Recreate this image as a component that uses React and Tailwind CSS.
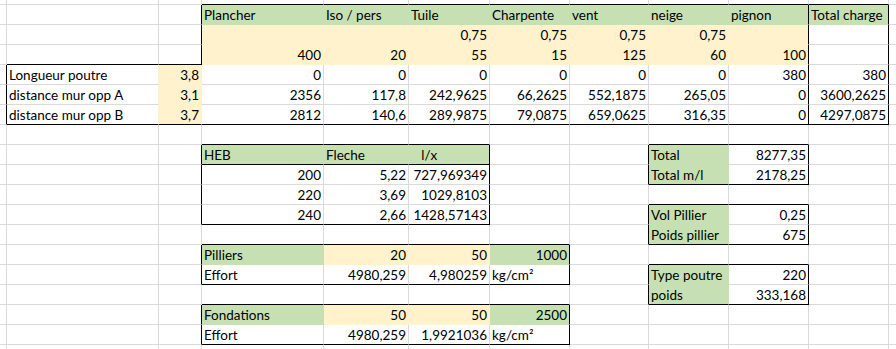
import React from "react";

const NCOLS = 12;
const NROWS = 19;

const fillBg = { g: "bg-[#c6e0b4]", o: "bg-[#fff2cc]" };
const rightColor = {
    k: "border-r-black",
    n: "border-r-[#dadada]",
    g: "border-r-[#c6e0b4]",
    o: "border-r-[#fff2cc]",
};
const bottomColor = {
    k: "border-b-black",
    n: "border-b-[#dadada]",
    g: "border-b-[#c6e0b4]",
    o: "border-b-[#fff2cc]",
};

// [row, col, text, fill]
const cellList = [
    // charges
    [1, 3, "Plancher", "g"], [1, 4, "Iso / pers", "g"], [1, 5, "Tuile", "g"], [1, 6, "Charpente", "g"],
    [1, 7, "vent", "g"], [1, 8, "neige", "g"], [1, 9, "pignon", "g"], [1, 10, "Total charge", "g"],
    [2, 3, "", "o"], [2, 4, "", "o"], [2, 5, "0,75", "o"], [2, 6, "0,75", "o"],
    [2, 7, "0,75", "o"], [2, 8, "0,75", "o"], [2, 9, "", "o"],
    [3, 3, "400", "o"], [3, 4, "20", "o"], [3, 5, "55", "o"], [3, 6, "15", "o"],
    [3, 7, "125", "o"], [3, 8, "60", "o"], [3, 9, "100", "o"],
    [4, 1, "Longueur poutre"], [4, 2, "3,8", "o"], [4, 3, "0"], [4, 4, "0"], [4, 5, "0"], [4, 6, "0"],
    [4, 7, "0"], [4, 8, "0"], [4, 9, "380"], [4, 10, "380"],
    [5, 1, "distance mur opp A"], [5, 2, "3,1", "o"], [5, 3, "2356"], [5, 4, "117,8"], [5, 5, "242,9625"],
    [5, 6, "66,2625"], [5, 7, "552,1875"], [5, 8, "265,05"], [5, 9, "0"], [5, 10, "3600,2625"],
    [6, 1, "distance mur opp B"], [6, 2, "3,7", "o"], [6, 3, "2812"], [6, 4, "140,6"], [6, 5, "289,9875"],
    [6, 6, "79,0875"], [6, 7, "659,0625"], [6, 8, "316,35"], [6, 9, "0"], [6, 10, "4297,0875"],
    // HEB
    [8, 3, "HEB", "g"], [8, 4, "Fleche", "g"], [8, 5, "   l/x", "g"],
    [9, 3, "200"], [9, 4, "5,22"], [9, 5, "727,969349"],
    [10, 3, "220"], [10, 4, "3,69"], [10, 5, "1029,8103"],
    [11, 3, "240"], [11, 4, "2,66"], [11, 5, "1428,57143"],
    // piliers / fondations
    [13, 3, "Pilliers", "g"], [13, 4, "20", "o"], [13, 5, "50", "o"], [13, 6, "1000", "g"],
    [14, 3, "Effort"], [14, 4, "4980,259"], [14, 5, "4,980259"], [14, 6, "kg/cm²"],
    [16, 3, "Fondations", "g"], [16, 4, "50", "o"], [16, 5, "50", "o"], [16, 6, "2500", "g"],
    [17, 3, "Effort"], [17, 4, "4980,259"], [17, 5, "1,9921036"], [17, 6, "kg/cm²"],
    // totaux
    [8, 8, "Total", "g"], [8, 9, "8277,35"],
    [9, 8, "Total m/l", "g"], [9, 9, "2178,25"],
    [11, 8, "Vol Pillier", "g"], [11, 9, "0,25"],
    [12, 8, "Poids pillier", "g"], [12, 9, "675"],
    [14, 8, "Type poutre", "g"], [14, 9, "220"],
    [15, 8, "poids", "g"], [15, 9, "333,168"],
];

const grid = {};
cellList.forEach(([r, c, text, fill]) => {
    grid[r] = grid[r] || {};
    grid[r][c] = { text, fill };
});

const hBlack = new Set();
const vBlack = new Set();
const h = (r, c1, c2) => { for (let c = c1; c <= c2; c++) hBlack.add(`${r},${c}`); };
const v = (c, r1, r2) => { for (let r = r1; r <= r2; r++) vBlack.add(`${r},${c}`); };

// tableau des charges
h(0, 3, 10); h(3, 1, 2); h(6, 1, 10);
v(0, 4, 6); v(2, 1, 3); v(9, 1, 6); v(10, 1, 6);
// HEB
h(7, 3, 5); h(8, 3, 5); h(11, 3, 5); v(2, 8, 11); v(5, 8, 11);
// Pilliers
h(12, 3, 6); h(14, 3, 6); v(2, 13, 14); v(6, 13, 14);
// Fondations
h(15, 3, 6); h(17, 3, 6); v(2, 16, 17); v(6, 16, 17);
// blocs de droite
h(7, 8, 9); h(9, 8, 9); v(7, 8, 9); v(9, 8, 9);
h(10, 8, 9); h(12, 8, 9); v(7, 11, 12); v(9, 11, 12);
h(13, 8, 9); h(15, 8, 9); v(7, 14, 15); v(9, 14, 15);

const isNumber = (t) => /^[\d,]+$/.test(t);

function Cell({ r, c }) {
    const cell = grid[r]?.[c];
    const fill = cell?.fill;
    const rightFill = fill || grid[r]?.[c + 1]?.fill;
    const bottomFill = fill || grid[r + 1]?.[c]?.fill;
    const rc = vBlack.has(`${r},${c}`) ? "k" : rightFill || "n";
    const bc = hBlack.has(`${r},${c}`) ? "k" : bottomFill || "n";
    const text = cell?.text || "";
    const right = isNumber(text);

    return (
        <div
            className={`border-r border-b ${rightColor[rc]} ${bottomColor[bc]} ${fill ? fillBg[fill] : "bg-white"} whitespace-pre px-[2px] pt-[1px] leading-[19px] overflow-visible ${right ? "text-right" : "text-left"}`}
        >
            {text}
        </div>
    );
}

export default function App() {
    return (
        <div className="w-[896px] h-[349px] overflow-hidden bg-white text-black text-[13.5px] font-['Lato',sans-serif]">
            <div className="grid grid-cols-[7px_152px_43px_122px_85px_81px_80px_79px_80px_80px_80px_40px] grid-rows-[5px_repeat(18,20px)]">
                {Array.from({ length: NROWS }).map((_, r) =>
                    Array.from({ length: NCOLS }).map((_, c) => <Cell key={`${r}-${c}`} r={r} c={c} />)
                )}
            </div>
        </div>
    );
}
